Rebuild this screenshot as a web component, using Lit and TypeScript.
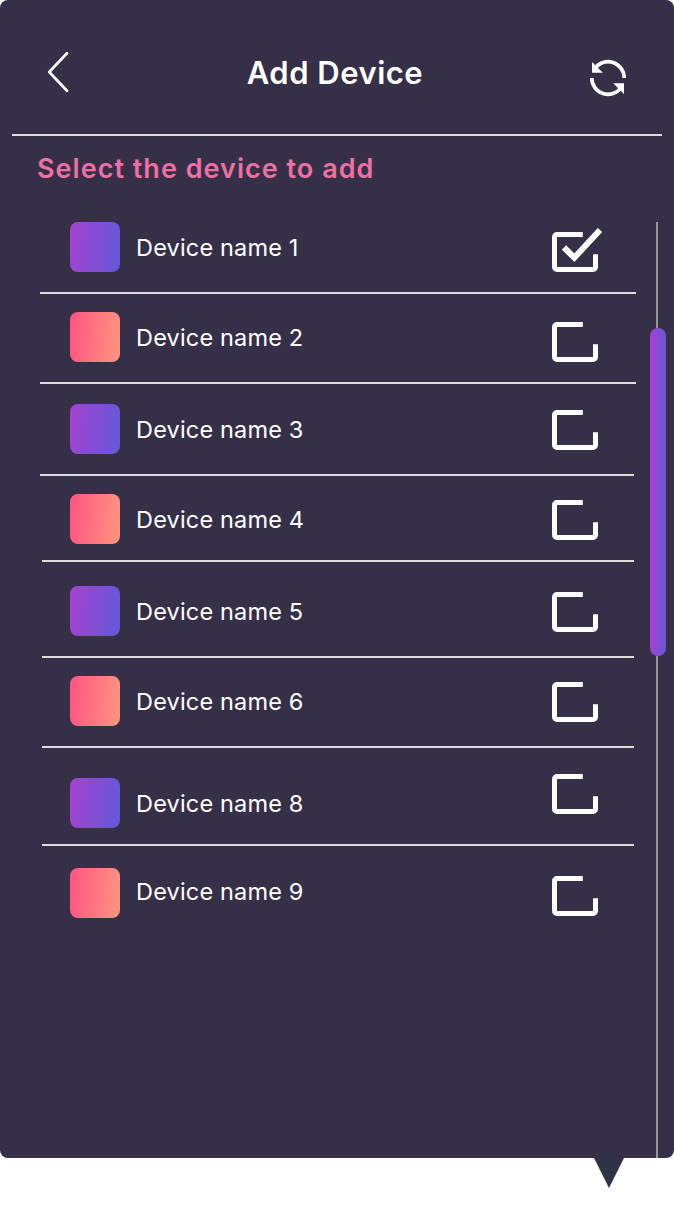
import { LitElement, html, css, svg, nothing } from "lit";
import { customElement, property } from "lit/decorators.js";
import { styleMap } from "lit/directives/style-map.js";

interface Device {
  name: string;
  tone: "violet" | "coral";
  checked?: boolean;
  height: number;
  lead: number;
  checkLead: number;
  textShift?: number;
  rule: "wide" | "mid" | "narrow" | "none";
}

const DEVICES: Device[] = [
  { name: "Device name 1", tone: "violet", checked: true, height: 92, lead: 20, checkLead: 30, rule: "wide" },
  { name: "Device name 2", tone: "coral", height: 90, lead: 18, checkLead: 28, rule: "wide" },
  { name: "Device name 3", tone: "violet", height: 92, lead: 20, checkLead: 26, rule: "mid" },
  { name: "Device name 4", tone: "coral", height: 86, lead: 18, checkLead: 24, rule: "narrow" },
  { name: "Device name 5", tone: "violet", height: 96, lead: 24, checkLead: 30, rule: "narrow" },
  { name: "Device name 6", tone: "coral", height: 90, lead: 18, checkLead: 24, rule: "narrow" },
  { name: "Device name 8", tone: "violet", height: 98, lead: 30, checkLead: 26, rule: "narrow" },
  { name: "Device name 9", tone: "coral", height: 90, lead: 22, checkLead: 30, textShift: -2, rule: "none" },
];

@customElement("check-mark")
class CheckMark extends LitElement {
  @property({ type: Boolean }) checked = false;

  static styles = css`
    :host { display: block; width: 46px; height: 40px; }
    svg { display: block; overflow: visible; }
  `;

  render() {
    return html`<svg width="46" height="40" viewBox="0 0 46 40" fill="none" stroke="#fff" stroke-width="5">
      <path d="M30.8 2.5H5A2.5 2.5 0 0 0 2.5 5V35A2.5 2.5 0 0 0 5 37.5H41A2.5 2.5 0 0 0 43.500 35V22.200" />
      ${this.checked ? svg`<path d="M12 15.500L22.300 25.700L48 -2" stroke-width="6" />` : nothing}
    </svg>`;
  }
}

@customElement("device-row")
class DeviceRow extends LitElement {
  @property({ attribute: false }) device!: Device;

  static styles = css`
    :host { display: block; }
    .row { box-sizing: border-box; display: flex; align-items: flex-start; padding-left: 30px; }
    .swatch { flex: none; width: 50px; height: 50px; border-radius: 8px; }
    .violet { background: linear-gradient(96deg, #a543cf 0%, #6259db 100%); }
    .coral { background: linear-gradient(96deg, #ff5482 0%, #ff957f 100%); }
    .name {
      flex: none; width: 416px; margin-left: 16px; line-height: 52px;
      font-size: 23.5px; letter-spacing: 0.17px; color: #fff; white-space: nowrap;
    }
    .rule { height: 2px; background: #dcdcdc; }
    .wide { margin: 0; }
    .mid { margin-right: 2px; }
    .narrow { margin: 0 2px; }
    .none { visibility: hidden; }
  `;

  render() {
    const d = this.device;
    return html`
      <div class="row" style=${styleMap({ height: `${d.height - 2}px` })}>
        <div class="swatch ${d.tone}" style=${styleMap({ marginTop: `${d.lead}px` })}></div>
        <div class="name" style=${styleMap({ marginTop: `${d.lead + (d.textShift ?? 0)}px` })}>${d.name}</div>
        <check-mark ?checked=${d.checked} style=${styleMap({ marginTop: `${d.checkLead}px` })}></check-mark>
      </div>
      <div class="rule ${d.rule}"></div>
    `;
  }
}

@customElement("app-root")
class AppRoot extends LitElement {
  static styles = css`
    :host { display: block; height: 1210px; background: #fff; font-family: Inter, "Liberation Sans", sans-serif; }
    .panel { display: flex; flex-direction: column; height: 1158px; border-radius: 8px; background: #353047; overflow: hidden; }
    header {
      box-sizing: border-box; display: grid; grid-template-columns: 60px 1fr 60px;
      height: 136px; margin: 0 12px; border-bottom: 2px solid #dcdcdc;
    }
    .back { margin: 50px 0 0 34px; }
    .refresh { margin: 58px 0 0 -14px; }
    svg { display: block; }
    h1 {
      margin: 53px 0 0; padding-right: 4px; text-align: center; line-height: 40px;
      font-size: 31px; font-weight: 600; letter-spacing: 0.5px; color: #fff;
    }
    h2 {
      margin: 16px 0 0 37px; height: 50px; line-height: 34px;
      font-size: 27px; font-weight: 600; letter-spacing: 1.02px; color: #ee6fa2;
    }
    .body { flex: 1; display: flex; }
    .list { width: 596px; margin-left: 40px; }
    .track {
      display: flex; flex-direction: column;
      width: 16px; margin: 20px 0 0 14px;
    }
    .line { width: 2px; margin-left: 6px; background: #979797; }
    .upper { height: 106px; }
    .lower { flex: 1; }
    .thumb { width: 16px; height: 328px; border-radius: 8px; background: linear-gradient(90deg, #a940cf, #6259db); }
    .tail { margin-left: 594px; }
  `;

  render() {
    return html`
      <div class="panel">
        <header>
          <svg class="back" width="24" height="44" viewBox="0 0 24 44" fill="none" stroke="#fff"
            stroke-width="2.700" stroke-linecap="round" stroke-linejoin="round">
            <path d="M21 3.200L3.200 22L21 40.800" />
          </svg>
          <h1>Add Device</h1>
          <svg class="refresh" width="40" height="40" viewBox="0 0 40 40">
            <g fill="none" stroke="#fff" stroke-width="3.600">
              <path d="M6.800 10.500A16.200 16.200 0 0 1 36.200 20" />
              <path d="M33.200 29.500A16.200 16.200 0 0 1 3.800 20" />
            </g>
            <path fill="#fff" d="M4 4V14.700H14.800ZM36 36V25.300H25.200Z" />
          </svg>
        </header>
        <h2>Select the device to add</h2>
        <div class="body">
          <div class="list">
            ${DEVICES.map((d) => html`<device-row .device=${d}></device-row>`)}
          </div>
          <div class="track">
            <div class="line upper"></div>
            <div class="thumb"></div>
            <div class="line lower"></div>
          </div>
        </div>
      </div>
      <svg class="tail" width="30" height="30" viewBox="0 0 30 30"><path fill="#303346" d="M0 0H30L15 30Z" /></svg>
    `;
  }
}
